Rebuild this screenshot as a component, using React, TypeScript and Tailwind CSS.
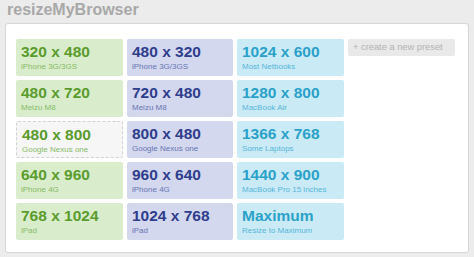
import { memo } from "react";

type Preset = {
  size: string;
  label: string;
  tone: "green" | "blue" | "cyan" | "empty";
};

const tones = {
  green: {
    box: "bg-[#d9edcc]",
    size: "text-[#5a9c2c]",
    label: "text-[#86ba66]",
  },
  blue: {
    box: "bg-[#d3d8ee]",
    size: "text-[#2e3d8c]",
    label: "text-[#6875b3]",
  },
  cyan: {
    box: "bg-[#caebf6]",
    size: "text-[#2aa1c9]",
    label: "text-[#56b5d6]",
  },
  empty: {
    box: "bg-[#f6f6f6] border border-dashed border-[#d2d2d2]",
    size: "text-[#5a9c2c]",
    label: "text-[#86ba66]",
  },
};

const rows: Preset[][] = [
  [
    { size: "320 x 480", label: "iPhone 3G/3GS", tone: "green" },
    { size: "480 x 320", label: "iPhone 3G/3GS", tone: "blue" },
    { size: "1024 x 600", label: "Most Netbooks", tone: "cyan" },
  ],
  [
    { size: "480 x 720", label: "Meizu M8", tone: "green" },
    { size: "720 x 480", label: "Meizu M8", tone: "blue" },
    { size: "1280 x 800", label: "MacBook Air", tone: "cyan" },
  ],
  [
    { size: "480 x 800", label: "Google Nexus one", tone: "empty" },
    { size: "800 x 480", label: "Google Nexus one", tone: "blue" },
    { size: "1366 x 768", label: "Some Laptops", tone: "cyan" },
  ],
  [
    { size: "640 x 960", label: "iPhone 4G", tone: "green" },
    { size: "960 x 640", label: "iPhone 4G", tone: "blue" },
    { size: "1440 x 900", label: "MacBook Pro 15 inches", tone: "cyan" },
  ],
  [
    { size: "768 x 1024", label: "iPad", tone: "green" },
    { size: "1024 x 768", label: "iPad", tone: "blue" },
    { size: "Maximum", label: "Resize to Maximum", tone: "cyan" },
  ],
];

const PresetCard = memo(function PresetCard({ preset }: { preset: Preset }) {
  const t = tones[preset.tone];
  return (
    <div className={`h-[37px] rounded-[2px] pl-[5px] pt-[4px] ${t.box}`}>
      <p className={`text-[15.5px] font-bold leading-[18px] ${t.size}`}>
        {preset.size}
      </p>
      <p className={`mt-[1px] text-[8px] leading-[10px] ${t.label}`}>
        {preset.label}
      </p>
    </div>
  );
});

export default function App() {
  return (
    <div className="h-[257px] w-[474px] overflow-hidden bg-[#ececec] font-['Liberation_Sans',Arial,sans-serif]">
      <h1 className="pl-[7px] text-[16px] font-bold leading-[19px] text-[#a8a8a8]">
        resizeMyBrowser
      </h1>
      <div className="ml-[5px] mt-[4px] w-[464px] rounded-[3px] border border-[#d6d6d6] bg-white pb-[12px] pl-[10px] pt-[15px]">
        <div className="grid grid-cols-[107px_106px_107px_107px] gap-[4px]">
          {rows.map((row, i) => (
            <div key={i} className="contents">
              {row.map((p) => (
                <PresetCard key={p.size + p.label} preset={p} />
              ))}
              {i === 0 ? (
                <div className="h-[17px] rounded-[2px] bg-[#e9e9e9] pl-[5px] text-[9.3px] leading-[17px] text-[#b3b3b3]">
                  + create a new preset
                </div>
              ) : (
                <div />
              )}
            </div>
          ))}
        </div>
      </div>
    </div>
  );
}
